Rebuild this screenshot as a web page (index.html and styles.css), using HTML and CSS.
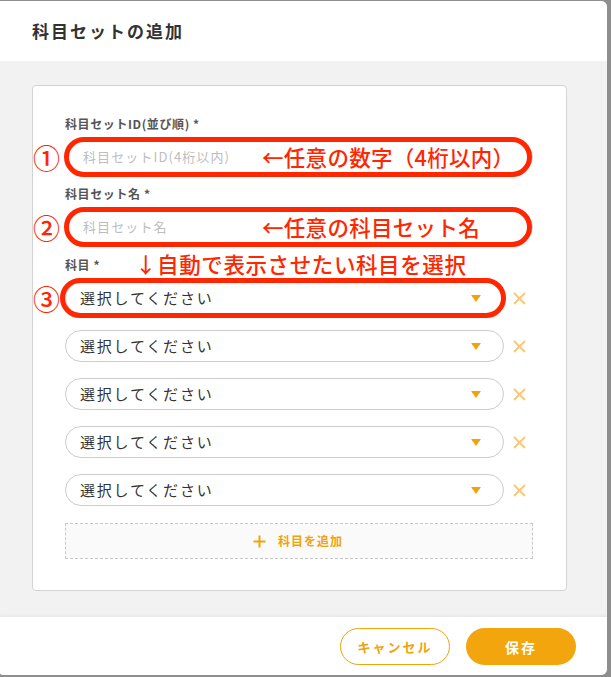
FILE: index.html
```html
<!DOCTYPE html>
<html lang="ja">
<head>
<meta charset="utf-8">
<title>科目セットの追加</title>
<link rel="stylesheet" href="styles.css">
</head>
<body>
<div class="modal">
  <header class="modal-head">
    <h1 class="title">科目セットの追加</h1>
  </header>
  <main class="modal-body">
    <section class="card">
      <div class="field">
        <div class="label">科目セットID(並び順) *</div>
        <div class="control">
          <div class="input">科目セットID(4桁以内)</div>
          <span class="ring ring-input"></span>
          <span class="num">①</span>
          <span class="note note-input">←任意の数字（4桁以内）</span>
        </div>
      </div>
      <div class="field">
        <div class="label">科目セット名 *</div>
        <div class="control">
          <div class="input">科目セット名</div>
          <span class="ring ring-input"></span>
          <span class="num">②</span>
          <span class="note note-input">←任意の科目セット名</span>
        </div>
      </div>
      <div class="field field-subjects">
        <div class="label label-subjects">科目 *<span class="note note-label">↓自動で表示させたい科目を選択</span></div>
        <div class="rows">
          <div class="row">
            <div class="select">選択してください<span class="caret"></span></div>
            <span class="remove"><svg width="13" height="13" viewBox="0 0 13 13"><path d="M1 1l11 11M12 1L1 12" stroke="#f6c77a" stroke-width="1.8" fill="none"/></svg></span>
            <span class="ring ring-select"></span>
            <span class="num num-select">③</span>
          </div>
          <div class="row">
            <div class="select">選択してください<span class="caret"></span></div>
            <span class="remove"><svg width="13" height="13" viewBox="0 0 13 13"><path d="M1 1l11 11M12 1L1 12" stroke="#f6c77a" stroke-width="1.8" fill="none"/></svg></span>
          </div>
          <div class="row">
            <div class="select">選択してください<span class="caret"></span></div>
            <span class="remove"><svg width="13" height="13" viewBox="0 0 13 13"><path d="M1 1l11 11M12 1L1 12" stroke="#f6c77a" stroke-width="1.8" fill="none"/></svg></span>
          </div>
          <div class="row">
            <div class="select">選択してください<span class="caret"></span></div>
            <span class="remove"><svg width="13" height="13" viewBox="0 0 13 13"><path d="M1 1l11 11M12 1L1 12" stroke="#f6c77a" stroke-width="1.8" fill="none"/></svg></span>
          </div>
          <div class="row">
            <div class="select">選択してください<span class="caret"></span></div>
            <span class="remove"><svg width="13" height="13" viewBox="0 0 13 13"><path d="M1 1l11 11M12 1L1 12" stroke="#f6c77a" stroke-width="1.8" fill="none"/></svg></span>
          </div>
        </div>
      </div>
      <div class="add">
        <svg class="plus" width="13" height="13" viewBox="0 0 13 13"><path d="M6.5 0.5v12M0.5 6.5h12" stroke="#f0a30a" stroke-width="2" fill="none"/></svg>
        <span class="add-text">科目を追加</span>
      </div>
    </section>
  </main>
  <footer class="modal-foot">
    <div class="btn btn-cancel">キャンセル</div>
    <div class="btn btn-save">保存</div>
  </footer>
</div>
</body>
</html>
```

FILE: styles.css
```css
* { box-sizing: border-box; }
html, body { margin: 0; padding: 0; }
body {
  background: #8e8e8e;
  width: 611px;
  height: 677px;
  overflow: hidden;
  font-family: "Noto Sans CJK JP", "Noto Sans", sans-serif;
  color: #333;
}
.modal {
  margin-top: 1px;
  width: 607px;
  height: 674px;
  background: #f2f2f2;
  border-radius: 0 6px 6px 3px;
  overflow: hidden;
  display: flex;
  flex-direction: column;
}
.modal-head {
  background: #fff;
  height: 60px;
  display: flex;
  align-items: center;
  padding-left: 32px;
}
.title {
  margin: 0;
  font-size: 17px;
  font-weight: 700;
  letter-spacing: 2px;
  color: #333;
  line-height: 1;
  position: relative;
  top: -1px;
}
.modal-body {
  padding: 24px 40px 24px 32px;
  flex: 1;
}
.card {
  background: #fff;
  border: 1px solid #d3d3d3;
  border-radius: 4px;
  padding: 29px 33px 31px 32px;
  display: flex;
  flex-direction: column;
}
.field { display: flex; flex-direction: column; }
.field + .field { margin-top: 12px; }
.field-subjects { margin-top: 13px !important; }
.label {
  font-size: 12px;
  line-height: 18px;
  font-weight: 700;
  color: #555;
  letter-spacing: 0.6px;
  margin-bottom: 8px;
  position: relative;
}
.control { position: relative; }
.input {
  height: 32px;
  border: 1px solid #ccc;
  border-radius: 16px;
  padding-left: 17px;
  font-size: 13px;
  line-height: 30px;
  letter-spacing: 1.1px;
  color: #bdbdbd;
}
.ring {
  position: absolute;
  border: 5px solid #ff2600;
  border-radius: 22px;
  pointer-events: none;
}
.ring-input { left: -1px; right: 1px; top: -4px; bottom: -4px; }
.num {
  position: absolute;
  left: -32px;
  top: 50%;
  transform: translateY(-50%);
  font-size: 27px;
  font-weight: 500;
  line-height: 1;
  color: #ff2600;
}
.note {
  position: absolute;
  font-size: 21.5px;
  line-height: 1;
  font-weight: 500;
  color: #ff2600;
  white-space: nowrap;
  letter-spacing: 0.3px;
}
.note-input { left: 197px; top: 50%; transform: translateY(-52%); }
.note-label { left: 70px; top: 50%; transform: translateY(-55%); letter-spacing: 0.6px; }
.rows { display: flex; flex-direction: column; gap: 16px; }
.row {
  display: flex;
  align-items: center;
  position: relative;
}
.select {
  flex: 1;
  height: 32px;
  border: 1px solid #ccc;
  border-radius: 16px;
  padding-left: 14px;
  font-size: 15px;
  line-height: 30px;
  letter-spacing: 1.8px;
  color: #333;
  position: relative;
}
.caret {
  position: absolute;
  right: 22px;
  top: 12px;
  width: 0;
  height: 0;
  border-left: 5px solid transparent;
  border-right: 5px solid transparent;
  border-top: 7px solid #f0a30a;
}
.remove {
  width: 29px;
  display: flex;
  justify-content: center;
  align-items: center;
  padding-left: 1px;
}
.remove svg { display: block; }
.ring-select { left: -5px; right: 27px; top: -4px; bottom: -4px; }
.num-select { left: -32px; }
.add {
  margin-top: 17px;
  height: 36px;
  border: 1px dashed #c8c8c8;
  background: #fafafa;
  display: flex;
  align-items: center;
  justify-content: center;
  gap: 10px;
  color: #f0a30a;
}
.plus { position: relative; left: -2px; }
.add-text {
  font-size: 12px;
  font-weight: 700;
  letter-spacing: 1px;
  line-height: 1;
}
.modal-foot {
  background: #fff;
  height: 59px;
  border-top: 1px solid #e9e9e9;
  box-shadow: 0 -1px 3px rgba(0,0,0,0.04);
  display: flex;
  justify-content: flex-end;
  align-items: flex-start;
  padding: 11px 31px 0 0;
  gap: 16px;
}
.btn {
  width: 110px;
  height: 37px;
  border-radius: 19px;
  display: flex;
  align-items: center;
  justify-content: center;
  font-weight: 700;
  letter-spacing: 2px;
}
.btn-cancel {
  border: 1px solid #f0a30a;
  color: #f0a30a;
  font-size: 13px;
  background: #fff;
}
.btn-save {
  background: #f2a50c;
  color: #fff;
  font-size: 14px;
}
```
